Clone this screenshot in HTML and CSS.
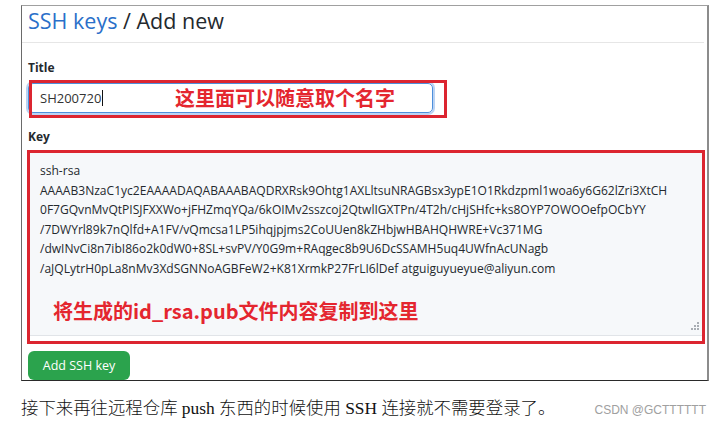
FILE: index.html
```html
<!DOCTYPE html>
<html lang="zh-CN">
<head>
<meta charset="utf-8">
<title>SSH keys / Add new</title>
<link rel="stylesheet" href="styles.css">
</head>
<body>
<div class="frame">
  <div class="head"><span class="crumb">SSH keys</span> / Add new</div>
  <div class="form">
    <div class="label label-title">Title</div>
    <div class="field">
      <div class="input">SH200720<span class="caret"></span></div>
      <div class="mark mark-title"></div>
      <div class="note note-title">这里面可以随意取个名字</div>
    </div>
    <div class="label label-key">Key</div>
    <div class="field">
      <div class="keybox">
        <span class="line">ssh-rsa</span>
        <span class="line">AAAAB3NzaC1yc2EAAAADAQABAAABAQDRXRsk9Ohtg1AXLltsuNRAGBsx3ypE1O1Rkdzpml1woa6y6G62lZri3XtCH</span>
        <span class="line">0F7GQvnMvQtPISJFXXWo+jFHZmqYQa/6kOIMv2sszcoj2QtwlIGXTPn/4T2h/cHjSHfc+ks8OYP7OWOOefpOCbYY</span>
        <span class="line">/7DWYrl89k7nQlfd+A1FV/vQmcsa1LP5ihqjpjms2CoUUen8kZHbjwHBAHQHWRE+Vc371MG</span>
        <span class="line">/dwINvCi8n7ibI86o2k0dW0+8SL+svPV/Y0G9m+RAqgec8b9U6DcSSAMH5uq4UWfnAcUNagb</span>
        <span class="line">/aJQLytrH0pLa8nMv3XdSGNNoAGBFeW2+K81XrmkP27FrLI6lDef atguiguyueyue@aliyun.com</span>
        <svg class="grip" width="9" height="9" viewBox="0 0 9 9"><g fill="#a8adb3"><rect x="6" y="0" width="2" height="2"/><rect x="3" y="3" width="2" height="2"/><rect x="6" y="3" width="2" height="2"/><rect x="0" y="6" width="2" height="2"/><rect x="3" y="6" width="2" height="2"/><rect x="6" y="6" width="2" height="2"/></g></svg>
      </div>
      <div class="mark mark-key"></div>
      <div class="note note-key">将生成的id_rsa.pub文件内容复制到这里</div>
    </div>
    <div class="btn">Add SSH key</div>
  </div>
</div>
<div class="foot">
  <p class="caption">接下来再往远程仓库 push 东西的时候使用 SSH 连接就不需要登录了。</p>
  <span class="wm">CSDN @GCTTTTTT</span>
</div>
</body>
</html>
```
FILE: styles.css
```css
html, body {
  margin: 0;
  padding: 0;
  background: #fff;
}
body {
  width: 722px;
  height: 425px;
  overflow: hidden;
  font-family: "Open Sans", "Noto Sans", sans-serif;
  color: #24292e;
}
.frame {
  margin: 5px 0 0 21px;
  width: 688px;
  box-sizing: border-box;
  border: 1px solid #a0a0a0;
  border-left-color: #6a6a6a;
  border-right: 2px solid #8c8c8c;
  border-bottom: 1px solid #2a2a2a;
}
.head {
  height: 36px;
  line-height: 30px;
  margin-right: 3px;
  padding-left: 6px;
  font-size: 21.5px;
  color: #24292e;
  border-bottom: 1px solid #e6e6e6;
}
.crumb {
  color: #2a6fc9;
}
.form {
  padding-left: 6px;
  display: flex;
  flex-direction: column;
  align-items: flex-start;
}
.label {
  font-size: 12px;
  font-weight: 700;
  line-height: 16px;
  color: #24292e;
}
.label-title { margin-top: 17px; }
.label-key { margin-top: 16px; }
.field {
  position: relative;
  margin-top: 7px;
}
.input {
  width: 405px;
  height: 30px;
  box-sizing: border-box;
  border: 1px solid #4d8fdb;
  border-radius: 5px;
  box-shadow: 0 0 0 2px rgba(60, 130, 220, 0.35);
  padding-left: 11px;
  font-size: 13px;
  line-height: 28px;
  color: #333;
  display: flex;
  align-items: center;
}
.caret {
  display: inline-block;
  width: 1px;
  height: 16px;
  background: #111;
  margin-left: 1px;
}
.mark {
  position: absolute;
  border: 3px solid #dc2530;
  box-sizing: border-box;
}
.mark-title {
  left: 1px;
  top: -3px;
  width: 418px;
  height: 38px;
}
.note {
  position: absolute;
  color: #e4262f;
  font-family: "Noto Sans CJK SC", "Open Sans", sans-serif;
  font-weight: 700;
  white-space: nowrap;
}
.note-title {
  left: 147px;
  top: 1px;
  font-size: 20px;
  line-height: 28px;
}
.keybox {
  position: relative;
  width: 675px;
  height: 184px;
  box-sizing: border-box;
  background: #f6f8fa;
  border: 1px solid #e1e4e8;
  padding: 8px 0 0 11px;
  font-size: 12.05px;
  line-height: 19.5px;
  color: #24292e;
}
.line {
  display: block;
  white-space: nowrap;
}
.grip {
  position: absolute;
  right: 2px;
  bottom: 4px;
}
.mark-key {
  left: -1px;
  top: -2px;
  width: 678px;
  height: 194px;
}
.note-key {
  left: 25px;
  top: 144px;
  font-size: 20px;
  line-height: 30px;
}
.btn {
  margin-top: 15px;
  width: 102px;
  height: 29px;
  box-sizing: border-box;
  border-radius: 6px;
  background: #2ba34d;
  color: #fff;
  font-size: 12.5px;
  line-height: 29px;
  text-align: center;
}
.foot {
  display: flex;
  justify-content: space-between;
  align-items: baseline;
  margin: 17px 16px 0 21px;
}
.caption {
  margin: 0;
  font-family: "Liberation Serif", "Noto Sans CJK SC", serif;
  font-size: 17.4px;
  font-weight: 300;
  line-height: 20px;
  color: #111;
}
.wm {
  font-family: "Liberation Sans", Arial, sans-serif;
  font-size: 12px;
  color: #a0a0a0;
}
```
